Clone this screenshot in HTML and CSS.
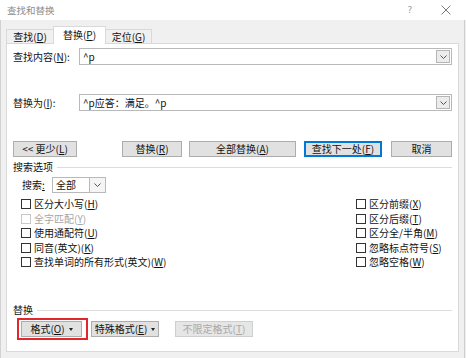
FILE: index.html
```html
<!DOCTYPE html>
<html lang="zh-CN">
<head>
<meta charset="utf-8">
<title>查找和替换</title>
<link rel="stylesheet" href="styles.css">
</head>
<body>
<div class="window">
  <div class="titlebar">
    <span class="title">查找和替换</span>
    <span class="help">?</span>
    <span class="close"><svg width="10" height="10" viewBox="0 0 10 10"><path d="M0.5 0.5 L9.5 9.5 M9.5 0.5 L0.5 9.5" stroke="#7a7a7a" stroke-width="1" fill="none"/></svg></span>
  </div>
  <div class="client">
    <div class="tabs">
      <div class="tab t1">查找(<u>D</u>)</div>
      <div class="tab t2 active">替换(<u>P</u>)</div>
      <div class="tab t3">定位(<u>G</u>)</div>
    </div>
    <div class="panel">
      <div class="field-row">
        <span class="flabel">查找内容(<u>N</u>):</span>
        <div class="combo">
          <span class="combo-text">^p</span>
          <span class="combo-btn"><svg width="7" height="4" viewBox="0 0 7 4"><polyline points="0.5,0.5 3.5,3.5 6.5,0.5" fill="none" stroke="#555" stroke-width="1"/></svg></span>
        </div>
      </div>
      <div class="field-row second">
        <span class="flabel">替换为(<u>I</u>):</span>
        <div class="combo">
          <span class="combo-text">^p应答：满足。^p</span>
          <span class="combo-btn"><svg width="7" height="4" viewBox="0 0 7 4"><polyline points="0.5,0.5 3.5,3.5 6.5,0.5" fill="none" stroke="#555" stroke-width="1"/></svg></span>
        </div>
      </div>
      <div class="btn-row">
        <button class="btn b-less">&lt;&lt; 更少(<u>L</u>)</button>
        <button class="btn b-rep">替换(<u>R</u>)</button>
        <button class="btn b-all">全部替换(<u>A</u>)</button>
        <button class="btn b-next default">查找下一处(<u>F</u>)</button>
        <button class="btn b-cancel">取消</button>
      </div>
      <div class="group-head">
        <span>搜索选项</span><span class="rule"></span>
      </div>
      <div class="search-row">
        <span class="slabel">搜索<u>:</u></span>
        <div class="select">
          <span class="select-text">全部</span>
          <span class="select-btn"><svg width="7" height="4" viewBox="0 0 7 4"><polyline points="0.5,0.5 3.5,3.5 6.5,0.5" fill="none" stroke="#555" stroke-width="1"/></svg></span>
        </div>
      </div>
      <div class="options">
        <div class="opt-col left">
          <div class="opt"><span class="box"></span>区分大小写(<u>H</u>)</div>
          <div class="opt disabled"><span class="box"></span>全字匹配(<u>Y</u>)</div>
          <div class="opt"><span class="box"></span>使用通配符(<u>U</u>)</div>
          <div class="opt"><span class="box"></span>同音(英文)(<u>K</u>)</div>
          <div class="opt"><span class="box"></span>查找单词的所有形式(英文)(<u>W</u>)</div>
        </div>
        <div class="opt-col right">
          <div class="opt"><span class="box"></span>区分前缀(<u>X</u>)</div>
          <div class="opt"><span class="box"></span>区分后缀(<u>T</u>)</div>
          <div class="opt"><span class="box"></span>区分全/半角(<u>M</u>)</div>
          <div class="opt"><span class="box"></span>忽略标点符号(<u>S</u>)</div>
          <div class="opt"><span class="box"></span>忽略空格(<u>W</u>)</div>
        </div>
      </div>
      <div class="replace-section">
        <div class="group-head small">
          <span>替换</span><span class="rule"></span>
        </div>
        <div class="fmt-row">
          <div class="highlight">
            <button class="btn b-fmt">格式(<u>O</u>) <span class="tri"></span></button>
          </div>
          <button class="btn b-special">特殊格式(<u>E</u>) <span class="tri"></span></button>
          <button class="btn b-nofmt" disabled>不限定格式(<u>T</u>)</button>
        </div>
      </div>
    </div>
  </div>
</div>
</body>
</html>
```

FILE: styles.css
```css
* { box-sizing: border-box; }
html, body { margin: 0; padding: 0; }
body {
  width: 466px;
  height: 358px;
  overflow: hidden;
  background: #f0f0f0;
  font-family: "Noto Sans CJK SC", "Microsoft YaHei", sans-serif;
  font-size: 10px;
  line-height: 12px;
  color: #111;
}
u { text-decoration: underline; text-underline-offset: 1px; }

.window { height: 358px; display: flex; flex-direction: column; }

.titlebar {
  height: 20px;
  background: #fff;
  display: flex;
  align-items: center;
  padding-left: 7px;
  padding-right: 10px;
}
.title { flex: 1; color: #8c8c8c; font-size: 9.5px; }
.help { width: 20px; text-align: center; color: #9a9a9a; font-size: 9px; font-family: "DejaVu Sans", sans-serif; margin-right: 16px; }
.close { width: 20px; display: flex; justify-content: center; }

.client {
  flex: 1;
  display: flex;
  flex-direction: column;
  padding: 6px 0 6px 5px;
  border-left: 1px solid #d2d2d2;
  border-right: 1px solid #cdcdcd;
  margin-right: 1px;
}

.tabs { display: flex; align-items: flex-end; height: 17px; }
.tab {
  height: 14px;
  border: 1px solid #d9d9d9;
  border-bottom: none;
  background: #f0f0f0;
  text-align: center;
  line-height: 12px;
  padding-top: 1px;
}
.t1 { width: 47px; border-right: none; }
.t2 { width: 53px; }
.t3 { width: 46px; border-left: none; }
.tab.active {
  height: 18px;
  background: #fff;
  margin-bottom: -1px;
  position: relative;
  z-index: 1;
  padding-top: 2px;
}

.panel {
  width: 453px;
  flex: 1;
  background: #fff;
  border: 1px solid #d9d9d9;
  padding: 4px 6px 11px 6px;
  display: flex;
  flex-direction: column;
}

.field-row { display: flex; align-items: center; height: 17px; }
.field-row.second { margin-top: 29px; }
.flabel { width: 66px; }
.combo {
  flex: 1;
  height: 17px;
  border: 1px solid #b9b9b9;
  display: flex;
  align-items: center;
  padding-left: 3px;
}
.combo-text { flex: 1; }
.combo-btn {
  width: 14px;
  height: 13px;
  margin-right: 1px;
  border: 1px solid #b5b5b5;
  background: #ececec;
  display: flex;
  align-items: center;
  justify-content: center;
}

.btn-row { display: flex; margin-top: 30px; height: 16px; }
.btn {
  height: 16px;
  padding: 0;
  border: 1px solid #adadad;
  background: #e1e1e1;
  font-family: inherit;
  font-size: 10px;
  line-height: 12px;
  color: #111;
  display: flex;
  align-items: center;
  justify-content: center;
}
.b-less { width: 64px; }
.b-rep { width: 60px; margin-left: 45px; }
.b-all { width: 107px; margin-left: 7px; }
.b-next { width: 78px; margin-left: 8px; }
.b-cancel { width: 61px; margin-left: 9px; }
.btn.default { border: 1px solid #0078d7; box-shadow: inset 0 0 0 1px #0078d7; }

.group-head { display: flex; align-items: center; margin-top: 4px; height: 12px; }
.group-head .rule { flex: 1; height: 1px; background: #dcdcdc; margin-left: 4px; }

.search-row { display: flex; align-items: center; margin-top: 4px; height: 16px; padding-left: 9px; }
.slabel { width: 30px; }
.select {
  width: 54px;
  height: 16px;
  border: 1px solid #b9b9b9;
  display: flex;
  align-items: center;
  padding-left: 3px;
}
.select-text { flex: 1; }
.select-btn {
  width: 17px;
  height: 16px;
  margin-right: -1px;
  border: 1px solid #b9b9b9;
  background: #f4f4f4;
  display: flex;
  align-items: center;
  justify-content: center;
}

.options { display: flex; margin-top: 4px; }
.opt-col.left { width: 343px; padding-left: 8px; }
.opt { display: flex; align-items: center; height: 14.5px; white-space: nowrap; }
.box {
  width: 10px;
  height: 10px;
  border: 1px solid #333;
  background: #fff;
  margin-right: 3px;
  flex: none;
}
.opt.disabled { color: #a6a6a6; }
.opt.disabled .box { border-color: #c8c8c8; }

.replace-section { margin-top: auto; }
.group-head.small { margin-top: 0; }
.fmt-row { display: flex; align-items: center; margin-top: 2px; }
.highlight {
  margin-left: 4px;
  border: 2px solid #e3262b;
  padding: 1px 4px 1px 2px;
}
.b-fmt { width: 61px; }
.b-special { width: 68px; margin-left: 3px; }
.b-nofmt {
  width: 78px;
  margin-left: 16px;
  background: #e6e6e6;
  border-color: #cfcfcf;
  color: #a8a8a8;
}
.tri {
  display: inline-block;
  width: 0;
  height: 0;
  border-left: 2.5px solid transparent;
  border-right: 2.5px solid transparent;
  border-top: 3px solid #222;
  margin-left: 4px;
}
```
